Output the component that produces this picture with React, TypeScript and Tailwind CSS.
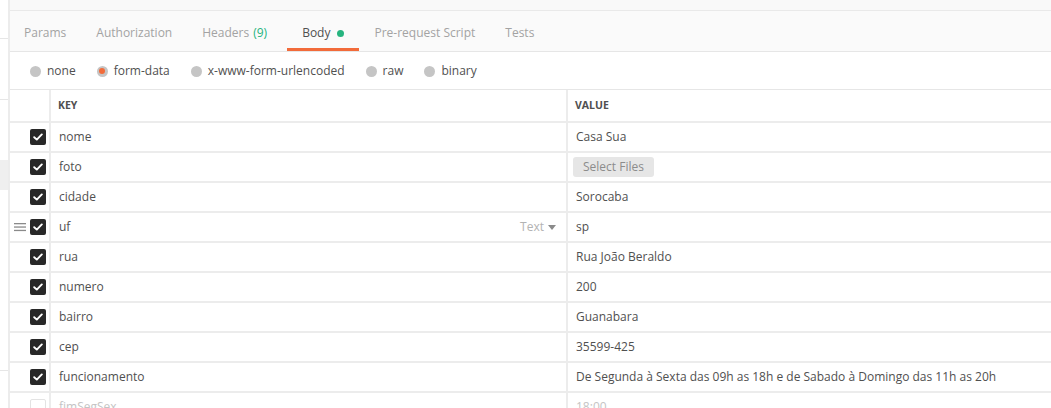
import { useState } from "react";

type Row = {
  key: string;
  value: string;
  file?: boolean;
  hover?: boolean;
  disabled?: boolean;
};

const rows: Row[] = [
  { key: "nome", value: "Casa Sua" },
  { key: "foto", value: "", file: true },
  { key: "cidade", value: "Sorocaba" },
  { key: "uf", value: "sp", hover: true },
  { key: "rua", value: "Rua João Beraldo" },
  { key: "numero", value: "200" },
  { key: "bairro", value: "Guanabara" },
  { key: "cep", value: "35599-425" },
  {
    key: "funcionamento",
    value: "De Segunda à Sexta das 09h as 18h e de Sabado à Domingo das 11h as 20h",
  },
  { key: "fimSegSex", value: "18:00", disabled: true },
];

const tabs = ["Params", "Authorization", "Headers", "Body", "Pre-request Script", "Tests"];
const bodyTypes = ["none", "form-data", "x-www-form-urlencoded", "raw", "binary"];

function Check({ on }: { on: boolean }) {
  if (!on) {
    return <div className="h-4 w-4 rounded-[2px] border border-[#e3e3e3] bg-white" />;
  }
  return (
    <div className="flex h-4 w-4 items-center justify-center rounded-[2px] bg-[#282828]">
      <svg width="10" height="8" viewBox="0 0 10 8" fill="none">
        <path d="M1.2 4.2 3.8 6.6 8.8 1.4" stroke="white" strokeWidth="1.9" strokeLinecap="round" strokeLinejoin="round" />
      </svg>
    </div>
  );
}

export default function App() {
  const [tab, setTab] = useState("Body");
  const [mode, setMode] = useState("form-data");

  return (
    <div className="flex h-[408px] w-[1051px] overflow-hidden bg-white font-['Open_Sans',sans-serif] text-[12px] text-[#505050]">
      {/* sidebar peeking out on the left */}
      <div className="flex w-[8px] shrink-0 flex-col bg-white">
        <div className="h-[39px] shrink-0 border-b border-[#e6e6e6]" />
        <div className="h-[61px] shrink-0 border-b border-[#e6e6e6]" />
        <div className="h-[60px] shrink-0" />
        <div className="h-[30px] shrink-0 bg-[#efefef]" />
        <div className="h-[181px] shrink-0 border-b border-[#e6e6e6]" />
      </div>
      <div className="w-[2px] shrink-0 bg-[#ececec]" />

      <div className="flex min-w-0 flex-1 flex-col">
        <div className="h-[11px] shrink-0 border-b border-[#e9e9e9] bg-[#f9f9f9]" />

        {/* request tabs */}
        <div className="flex h-[41px] shrink-0 items-stretch border-b border-[#e6e6e6] bg-[#fafafa]">
          {tabs.map((t) => (
            <button
              key={t}
              onClick={() => setTab(t)}
              className={`relative flex items-center pt-[4px] text-[12px] ${
                t === "Headers" ? "pl-[15px] pr-[20px]" : "px-[15px]"
              } ${t === "Params" ? "!pl-[14px]" : ""} ${tab === t ? "text-[#505050]" : "text-[#a3a3a3]"}`}
            >
              {t}
              {t === "Headers" && <span className="ml-[4px] text-[#26b47f]">(9)</span>}
              {t === "Body" && <span className="ml-[7px] mt-[1px] h-[7px] w-[7px] rounded-full bg-[#26b47f]" />}
              {tab === t && <span className="absolute bottom-0 left-0 right-0 h-[3px] bg-[#f26b3a]" />}
            </button>
          ))}
        </div>

        {/* body type radios */}
        <div className="flex h-[38px] shrink-0 items-center gap-[21px] border-b border-[#e6e6e6] pl-[20px] pt-[1px]">
          {bodyTypes.map((b) => (
            <label key={b} className="flex cursor-pointer items-center gap-[6px] text-[12px]" onClick={() => setMode(b)}>
              <span className="flex h-[11px] w-[11px] items-center justify-center rounded-full bg-[#c5c5c5]">
                {mode === b && <span className="h-[6px] w-[6px] rounded-full bg-[#f26b3a]" />}
              </span>
              {b}
            </label>
          ))}
        </div>

        {/* key/value table */}
        <div className="flex h-[33px] shrink-0 border-b-2 border-[#ececec]">
          <div className="w-[41px] shrink-0 border-r-2 border-[#ececec]" />
          <div className="flex w-[517px] shrink-0 items-center border-r-2 border-[#ececec] pl-[7px] pt-[1px] text-[10.5px] font-bold text-[#505050]">
            KEY
          </div>
          <div className="flex items-center pl-[7px] pt-[1px] text-[10.5px] font-bold text-[#505050]">VALUE</div>
        </div>

        {rows.map((r) => (
          <div key={r.key} className="flex h-[30px] shrink-0 border-b-2 border-[#ececec]">
            <div className="flex w-[41px] shrink-0 items-center justify-end gap-[4px] border-r-2 border-[#ececec] pr-[3px]">
              {r.hover && (
                <svg width="12" height="10" viewBox="0 0 12 10">
                  <rect x="0" y="1" width="12" height="1.3" fill="#8a8a8a" />
                  <rect x="0" y="4.4" width="12" height="1.3" fill="#8a8a8a" />
                  <rect x="0" y="7.8" width="12" height="1.3" fill="#8a8a8a" />
                </svg>
              )}
              <Check on={!r.disabled} />
            </div>
            <div
              className={`flex w-[517px] shrink-0 items-center justify-between border-r-2 border-[#ececec] pl-[8px] pr-[10px] ${
                r.disabled ? "text-[#c4c4c4]" : ""
              }`}
            >
              <span>{r.key}</span>
              {r.hover && (
                <span className="flex items-center gap-[4px] text-[#b3b3b3]">
                  Text
                  <svg width="8" height="5" viewBox="0 0 8 5">
                    <path d="M0 0h8L4 5z" fill="#8a8a8a" />
                  </svg>
                </span>
              )}
            </div>
            <div className={`flex min-w-0 items-center pl-[8px] ${r.disabled ? "text-[#c4c4c4]" : ""}`}>
              {r.file ? (
                <span className="-ml-[3px] rounded-[3px] bg-[#e6e6e6] px-[10px] py-[1px] text-[#8c8c8c]">Select Files</span>
              ) : (
                <span className="whitespace-nowrap">{r.value}</span>
              )}
            </div>
          </div>
        ))}
      </div>
    </div>
  );
}
